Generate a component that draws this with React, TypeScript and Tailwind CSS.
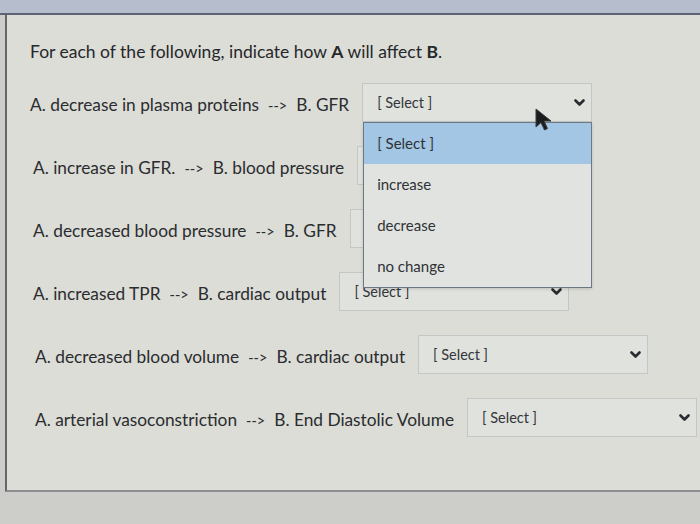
import React from "react";

const rows = [
  { label: "A. decrease in plasma proteins", b: "B. GFR", indent: "pl-0", open: true },
  { label: "A. increase in GFR.", b: "B. blood pressure", indent: "pl-[3px]", open: false },
  { label: "A. decreased blood pressure", b: "B. GFR", indent: "pl-[3px]", open: false },
  { label: "A. increased TPR", b: "B. cardiac output", indent: "pl-[3px]", open: false },
  { label: "A. decreased blood volume", b: "B. cardiac output", indent: "pl-[5px]", open: false },
  { label: "A. arterial vasoconstriction", b: "B. End Diastolic Volume", indent: "pl-[5px]", open: false },
];

const options = ["[ Select ]", "increase", "decrease", "no change"];

function Chevron() {
  return (
    <svg width="11" height="8" viewBox="0 0 11 8" className="shrink-0">
      <polyline points="1.5,1.5 5.5,5.5 9.5,1.5" fill="none" stroke="#2a2c30" strokeWidth="2.6" strokeLinecap="round" strokeLinejoin="round" />
    </svg>
  );
}

function SelectBox({ open }: { open: boolean }) {
  return (
    <div className="relative mb-[5px] w-[230px] h-[39px] shrink-0">
      <div className="h-full flex items-center justify-between pl-[14px] pr-[6px] border border-[#c3c7c6] bg-[#e0e2de] text-[14.5px] text-[#33363a]">
        <span>[ Select ]</span>
        <Chevron />
      </div>
      {open && (
        <div className="absolute left-px top-full w-[229px] z-20 border border-[#6d7884] bg-[#e1e3e0] shadow-[0_1px_3px_rgba(0,0,0,0.15)]">
          {options.map((o, i) => (
            <div
              key={o}
              className={`h-[41px] flex items-center px-[13px] text-[15px] text-[#2f3236] ${i === 0 ? "bg-[#a2c6e4]" : ""}`}
            >
              {o}
            </div>
          ))}
        </div>
      )}
    </div>
  );
}

export default function App() {
  return (
    <div className="relative w-[700px] h-[524px] overflow-hidden bg-[#cdcec9] font-['Lato','Liberation_Sans',sans-serif]">
      <div className="h-[13px] bg-[#b6bece]" />
      <div className="h-[2px] bg-[#5f6272]" />
      <div className="ml-[5px] h-[477px] border-l-2 border-b-2 border-l-[#64666a] border-b-[#8d8f93] bg-[#dcddd7] pl-[23px] pt-[27px]">
        <div className="flex flex-col gap-[23px]">
          <h1 className="h-[20px] leading-[20px] text-[17.5px] text-[#25272a]">
            For each of the following, indicate how <b>A</b> will affect <b>B</b>.
          </h1>
          {rows.map((r, i) => (
            <div key={i} className={`flex items-center gap-[13px] h-[40px] ${r.indent}`}>
              <span className="text-[17.3px] text-[#2a2c2f] whitespace-nowrap">
                {r.label}
                <span className="mx-[9px] text-[14.5px]">--&gt;</span>
                {r.b}
              </span>
              <SelectBox open={r.open} />
            </div>
          ))}
        </div>
      </div>

      {/* mouse cursor */}
      <svg className="absolute left-[534px] top-[108px] z-30" width="20" height="24" viewBox="0 0 20 24">
        <path d="M2 1 L2 19 L7 14.5 L10.5 22 L13.5 20.5 L10 13 L17 13 Z" fill="#1b1c1e" stroke="#3a3b3d" strokeWidth="1" />
      </svg>
    </div>
  );
}
